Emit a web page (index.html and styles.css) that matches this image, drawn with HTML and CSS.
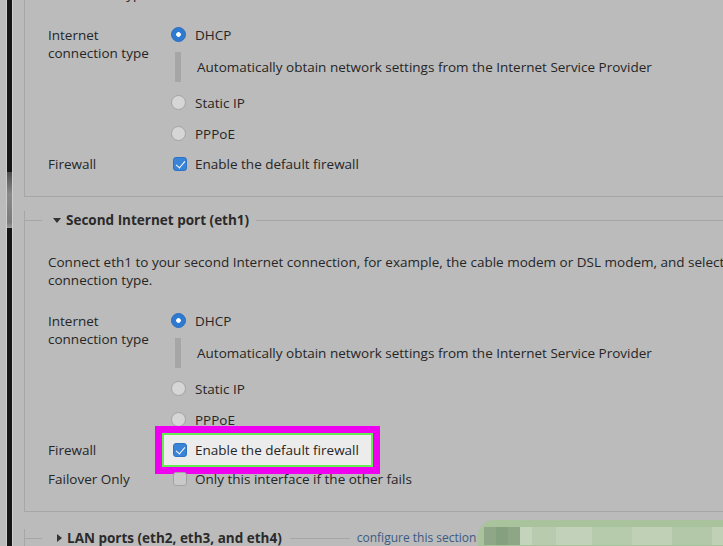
FILE: index.html
```html
<!DOCTYPE html>
<html lang="en">
<head>
  <meta charset="UTF-8">
  <meta name="viewport" content="width=device-width, initial-scale=1.0">
  <title>Internet ports</title>
  <link rel="stylesheet" href="styles.css">
</head>
<body>
  <div class="screen">
    <div class="edge">
      <div class="track"><div class="thumb"></div></div>
    </div>

    <main class="content">
      <!-- First Internet port (top is scrolled away) -->
      <div class="panel panel-first">
        <p class="intro">connection type.</p>
        <div class="field">
          <div class="field-label">Internet<br>connection type</div>
          <div class="field-control">
            <label class="option"><span class="radio checked"></span>DHCP</label>
            <div class="option-desc">Automatically obtain network settings from the Internet Service Provider</div>
            <label class="option"><span class="radio"></span>Static IP</label>
            <label class="option"><span class="radio"></span>PPPoE</label>
          </div>
        </div>
        <div class="field field-short">
          <div class="field-label">Firewall</div>
          <div class="field-control">
            <label class="option option-short"><span class="check checked"></span>Enable the default firewall</label>
          </div>
        </div>
      </div>

      <!-- Second Internet port -->
      <div class="panel panel-second">
        <div class="panel-head">
          <span class="panel-title"><span class="arrow-down"></span>Second Internet port (eth1)</span>
        </div>
        <p class="intro">Connect eth1 to your second Internet connection, for example, the cable modem or DSL modem, and select the<br>connection type.</p>
        <div class="field">
          <div class="field-label">Internet<br>connection type</div>
          <div class="field-control">
            <label class="option"><span class="radio checked"></span>DHCP</label>
            <div class="option-desc">Automatically obtain network settings from the Internet Service Provider</div>
            <label class="option"><span class="radio"></span>Static IP</label>
            <label class="option"><span class="radio"></span>PPPoE</label>
          </div>
        </div>
        <div class="field field-short">
          <div class="field-label">Firewall</div>
          <div class="field-control">
            <label class="option option-short highlight"><span class="check checked"></span>Enable the default firewall</label>
          </div>
        </div>
        <div class="field field-short">
          <div class="field-label">Failover Only</div>
          <div class="field-control">
            <label class="option option-short"><span class="check"></span>Only this interface if the other fails</label>
          </div>
        </div>
      </div>

      <!-- LAN ports -->
      <div class="panel panel-third">
        <div class="panel-head">
          <span class="panel-title"><span class="arrow-right"></span>LAN ports (eth2, eth3, and eth4)</span>
          <span class="head-line head-line-short"></span>
          <a class="head-link" href="#">configure this section</a>
        </div>
      </div>
    </main>

    <div class="blur"></div>
  </div>
</body>
</html>
```

FILE: styles.css
```css
* {
  box-sizing: border-box;
}

body {
  margin: 0;
  background: #bbbbbb;
  font-family: "Open Sans", "Liberation Sans", sans-serif;
  font-size: 13.5px;
  line-height: 18px;
  color: #262626;
  overflow: hidden;
}

.screen {
  position: relative;
  display: flex;
  width: 723px;
  height: 546px;
  overflow: hidden;
}

/* window edge + scrollbar */
.edge {
  flex: none;
  width: 24px;
  padding-left: 6px;
}
.track {
  position: relative;
  width: 7px;
  height: 100%;
  background: #151515;
  border-left: 1px solid #cfcfcf;
  border-right: 1px solid #cfcfcf;
}
.thumb {
  position: absolute;
  top: 172px;
  left: 0;
  width: 5px;
  height: 56px;
  background: linear-gradient(to bottom, #4d4d4d, #8a8a8a 40%, #7a7a7a 90%, #9c9c9c);
}

.content {
  flex: none;
  width: 780px;
}

.panel {
  border-left: 1px solid #a6a6a6;
  border-bottom: 1px solid #a6a6a6;
  padding: 0 0 18px 23px;
}
.panel-first {
  margin-top: -15px;
}
.panel-second {
  margin-top: 23px;
  padding-bottom: 18px;
}
.panel-third {
  margin-top: 26px;
  border-bottom: none;
  height: 40px;
}

.panel-head {
  display: flex;
  align-items: center;
  height: 18px;
  margin: -9px 0 0 -24px;
}
.panel-head::before {
  content: "";
  width: 18px;
  border-top: 1px solid #a6a6a6;
}
.panel-head::after {
  content: "";
  flex: 1;
  border-top: 1px solid #a6a6a6;
}
.panel-title {
  display: flex;
  align-items: center;
  gap: 5px;
  padding: 0 7px 0 11px;
  font-weight: 700;
  color: #2a2a2a;
}
.arrow-down {
  width: 0;
  height: 0;
  border-left: 4px solid transparent;
  border-right: 4px solid transparent;
  border-top: 5px solid #333333;
}
.arrow-right {
  width: 0;
  height: 0;
  margin-left: 4px;
  border-top: 4px solid transparent;
  border-bottom: 4px solid transparent;
  border-left: 5px solid #333333;
}
.head-line {
  border-top: 1px solid #a6a6a6;
}
.head-line-short {
  width: 60px;
}
.head-link {
  padding: 0 7px;
  font-size: 12px;
  color: #3a5a82;
  text-decoration: none;
}
.panel-third .panel-head .panel-title {
  padding-right: 8px;
}

.intro {
  margin: 0 0 16px;
  white-space: nowrap;
}
.panel-second .intro {
  margin: 24px 0 16px;
}

.field {
  display: grid;
  grid-template-columns: 123px 1fr;
}
.field-label {
  padding-top: 6.5px;
}
.field-short .field-label {
  padding-top: 5.5px;
}

.option {
  display: flex;
  align-items: center;
  gap: 9px;
  height: 31px;
  white-space: nowrap;
}
.option-short {
  height: 29px;
}

.option-desc {
  margin: 2px 0 5px 4px;
  padding: 6px 0 6px 16px;
  border-left: 6px solid #a6a6a6;
  white-space: nowrap;
}

.radio {
  flex: none;
  width: 15px;
  height: 15px;
  border-radius: 50%;
  background: #d6d6d6;
  border: 1px solid #a3a3a3;
}
.radio.checked {
  background: #2e7ad1 radial-gradient(circle, #ffffff 0 2px, transparent 2.6px);
  border-color: #2a6fc0;
}

.check {
  flex: none;
  width: 14px;
  height: 14px;
  margin-left: 2px;
  margin-right: -1px;
  border-radius: 3px;
  background: #c9c9c9;
  border: 1px solid #a3a3a3;
  position: relative;
}
.check.checked {
  background: #3a84d8;
  border-color: #2f72c4;
}
.check.checked::after {
  content: "";
  position: absolute;
  left: 4px;
  top: 1px;
  width: 4px;
  height: 8px;
  border-right: 1.5px solid #ffffff;
  border-bottom: 1.5px solid #ffffff;
  transform: rotate(40deg);
}

/* annotation box around the firewall option */
.highlight {
  margin: -9.5px 0 -9.5px -16px;
  padding: 0 15px 0 9px;
  height: 48px;
  width: 225px;
  border: 7px solid #f000f0;
  background: #ececec;
  box-shadow: inset 0 0 0 2px #66ee55;
}

/* blurred corner */
.blur {
  position: absolute;
  left: 478px;
  top: 520px;
  width: 270px;
  height: 40px;
  border-radius: 16px 0 0 0;
  background:
    linear-gradient(to right, transparent 0 6px, #8fa687 6px 18px, #84a07c 18px 30px, #8ea685 30px 42px, #c4d3bc 42px 54px, #b8cbae 54px 78px, #c2d1b9 78px 114px, #b6caac 114px 154px, #c0d0b7 154px 194px, #b3c8a8 194px 234px, #bfd0b6 234px),
    #a9c49c;
  background-size: 100% 18px, 100% 100%;
  background-position: 0 7px, 0 0;
  background-repeat: no-repeat;
}
```
